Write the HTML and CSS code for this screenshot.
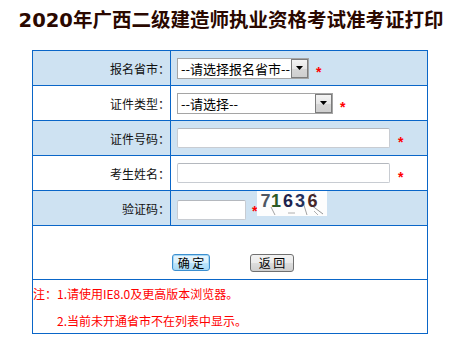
FILE: index.html
```html
<!DOCTYPE html>
<html lang="zh-CN">
<head>
<meta charset="utf-8">
<title>2020年广西二级建造师执业资格考试准考证打印</title>
<link rel="stylesheet" href="styles.css">
</head>
<body>
<h1 class="title">2020年广西二级建造师执业资格考试准考证打印</h1>
<div class="form">
  <div class="row blue">
    <div class="label">报名省市：</div>
    <div class="field">
      <span class="sel sel-province"><span class="sel-text">--请选择报名省市--</span><span class="sel-btn"><svg width="7" height="4" viewBox="0 0 7 4"><path d="M0 0H7L3.5 4Z" fill="#000"/></svg></span></span>
      <span class="star">*</span>
    </div>
  </div>
  <div class="row">
    <div class="label">证件类型：</div>
    <div class="field">
      <span class="sel sel-type"><span class="sel-text">--请选择--</span><span class="sel-btn"><svg width="7" height="4" viewBox="0 0 7 4"><path d="M0 0H7L3.5 4Z" fill="#000"/></svg></span></span>
      <span class="star">*</span>
    </div>
  </div>
  <div class="row blue">
    <div class="label">证件号码：</div>
    <div class="field">
      <input class="txt txt-long" type="text">
      <span class="star">*</span>
    </div>
  </div>
  <div class="row">
    <div class="label">考生姓名：</div>
    <div class="field">
      <input class="txt txt-long" type="text">
      <span class="star">*</span>
    </div>
  </div>
  <div class="row blue">
    <div class="label">验证码：</div>
    <div class="field field-code">
      <input class="txt txt-code" type="text">
      <span class="star star-code">*</span>
      <svg class="captcha" width="70" height="25" viewBox="0 0 70 25">
        <rect width="70" height="25" fill="#fdfdfd"/>
        <path d="M14 16 L18 24" stroke="#8a8a8a" stroke-width="0.8" fill="none"/>
        <path d="M31 22 L38 22" stroke="#9a9a9a" stroke-width="0.8" fill="none"/>
        <path d="M46 11 L50 24" stroke="#8a8a8a" stroke-width="0.8" fill="none"/>
        <path d="M52 6 L58 2" stroke="#aaaaaa" stroke-width="0.8" fill="none"/>
        <path d="M54 14 L66 23" stroke="#7a7a7a" stroke-width="0.8" fill="none"/>
        <path d="M57 20 L61 24" stroke="#9a9a9a" stroke-width="0.8" fill="none"/>
        <text x="3.5" y="16" fill="#4f5763" class="cap-d">7</text>
        <text x="14" y="16" fill="#2c5a26" class="cap-d">1</text>
        <text x="26" y="16" fill="#1c1f4c" class="cap-d">6</text>
        <text x="38" y="16" fill="#24305c" class="cap-d">3</text>
        <text x="50.5" y="16" fill="#46282a" class="cap-d">6</text>
      </svg>
    </div>
  </div>
  <div class="row row-buttons">
    <div class="buttons">
      <button class="btn btn-ok" type="button">确 定</button>
      <button class="btn btn-back" type="button">返 回</button>
    </div>
  </div>
  <div class="row row-notes">
    <div class="notes">
      <p class="note">注：1.请使用IE8.0及更高版本浏览器。</p>
      <p class="note note-indent">2.当前未开通省市不在列表中显示。</p>
    </div>
  </div>
</div>
</body>
</html>
```

FILE: styles.css
```css
html, body {
  margin: 0;
  padding: 0;
  background: #fff;
}

body {
  font-family: "Noto Sans CJK SC", "Noto Sans", sans-serif;
  font-size: 12px;
  color: #000;
}

.title {
  margin: 0 0 15px 0;
  padding: 7px 0 0 5px;
  height: 28px;
  line-height: 28px;
  text-align: center;
  font-family: "DejaVu Sans", "Noto Sans CJK SC", sans-serif;
  font-size: 19.5px;
  font-weight: bold;
  color: #2a0800;
  white-space: nowrap;
}

.form {
  margin-left: 32px;
  width: 396px;
  box-sizing: border-box;
  border: 1px solid #0a66c8;
}

.row {
  display: grid;
  grid-template-columns: 138px 1fr;
  height: 35px;
  box-sizing: border-box;
  border-top: 1px solid #0a66c8;
}

.row:first-child {
  height: 34px;
  border-top: 0;
}

.blue {
  background: #cee2f2;
}

.label {
  box-sizing: border-box;
  border-right: 1px solid #0a66c8;
  display: flex;
  align-items: center;
  justify-content: flex-end;
  padding-right: 0;
  font-size: 12px;
  color: #111;
}

.field {
  display: flex;
  align-items: center;
  padding-left: 6px;
}

.sel {
  display: flex;
  align-items: stretch;
  height: 21px;
  box-sizing: border-box;
  border: 1px solid #a5a5a5;
  background: #fff;
}

.sel-province { width: 132px; }
.sel-type { width: 156px; }

.sel-text {
  flex: 1;
  display: flex;
  align-items: center;
  padding-left: 3px;
  font-size: 13px;
  color: #000;
  white-space: nowrap;
  overflow: hidden;
}

.sel-btn {
  width: 17px;
  box-sizing: border-box;
  border: 1px solid #7c7c7c;
  background: linear-gradient(#f4f4f4, #e6e6e6 50%, #d6d6d6 51%, #cfcfcf);
  display: flex;
  align-items: center;
  justify-content: center;
}

.star {
  margin-left: 7px;
  margin-top: 7px;
  font-family: "Liberation Sans", sans-serif;
  font-size: 14px;
  font-weight: bold;
  line-height: 14px;
  color: #f00;
}

.txt {
  box-sizing: border-box;
  height: 20px;
  margin: 0;
  padding: 0 2px;
  border: 1px solid #c8ccd2;
  border-top-color: #b4b8be;
  border-radius: 2px;
  background: #fff;
  font-size: 12px;
  outline: none;
}

.txt-long { width: 213px; }

.txt-long + .star { margin-left: 8px; }

.field-code {
  align-items: flex-start;
}

.txt-code {
  width: 69px;
  margin-top: 9px;
}

.star-code {
  margin-left: 6px;
  margin-top: 13px;
}

.captcha {
  display: block;
  margin-left: 0;
}

.cap-d {
  font-family: "Liberation Sans", sans-serif;
  font-size: 18px;
  font-weight: bold;
}

.row-buttons,
.row-notes {
  grid-template-columns: 1fr;
  height: 54px;
  background: #fff;
}

.buttons {
  display: flex;
  justify-content: center;
  align-items: flex-start;
  gap: 40px;
  padding-top: 28px;
  padding-left: 6px;
}

.btn {
  margin: 0;
  padding: 0;
  height: 18px;
  box-sizing: border-box;
  border: 1px solid #707070;
  border-radius: 3px;
  background: linear-gradient(#f2f2f2, #ebebeb 50%, #dddddd 51%, #cfcfcf);
  font-family: "Noto Sans CJK SC", sans-serif;
  font-size: 12px;
  line-height: 16px;
  color: #000;
}

.btn-ok {
  width: 38px;
  height: 17px;
  border-color: #3c8fd0;
  box-shadow: inset 0 0 0 1px #a6d8f5;
  background: linear-gradient(#eaf6fd, #d9f0fc 50%, #bee6fd 51%, #a7d9f5);
}

.btn-back {
  width: 44px;
}

.notes {
  padding: 0;
}

.note {
  margin: 0;
  height: 27px;
  line-height: 27px;
  font-size: 12px;
  color: #f00;
  white-space: nowrap;
}

.note-indent {
  padding-left: 24px;
}
```
